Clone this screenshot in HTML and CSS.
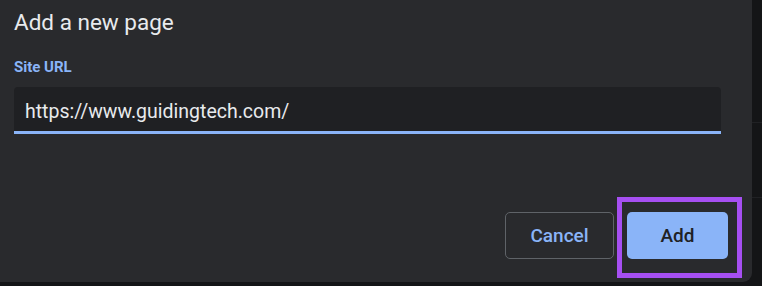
FILE: index.html
```html
<!DOCTYPE html>
<html>
<head>
<meta charset="utf-8">
<link rel="stylesheet" href="styles.css">
</head>
<body>
<div class="screen">
  <div class="dialog">
    <h1 class="title">Add a new page</h1>
    <label class="label">Site URL</label>
    <div class="field"><span class="value">https://www.guidingtech.com/</span></div>
    <div class="actions">
      <button class="btn cancel">Cancel</button>
      <div class="highlight"><button class="btn add">Add</button></div>
    </div>
  </div>
  <div class="side">
    <div class="side-line l1"></div>
    <div class="side-line l2"></div>
  </div>
</div>
</body>
</html>
```
FILE: styles.css
```css
html, body {
  margin: 0;
  padding: 0;
  background: #141517;
  font-family: Roboto, "Liberation Sans", sans-serif;
}
.screen {
  display: flex;
  width: 762px;
  height: 286px;
  overflow: hidden;
}
.dialog {
  width: 752px;
  height: 282px;
  background: #292a2d;
  border-bottom-right-radius: 9px;
  box-sizing: border-box;
  padding: 0 0 0 14px;
  display: flex;
  flex-direction: column;
  flex-shrink: 0;
}
.title {
  margin: 8px 0 0 0;
  font-size: 22.5px;
  font-weight: 400;
  line-height: 28px;
  color: #e8eaed;
}
.label {
  margin-top: 23px;
  font-size: 15px;
  font-weight: 700;
  line-height: 16px;
  color: #8ab4f8;
}
.field {
  margin-top: 12px;
  width: 707px;
  height: 47px;
  box-sizing: border-box;
  background: #1f2023;
  border-radius: 4px 4px 0 0;
  border-bottom: 3px solid #8ab4f8;
  padding: 13px 11px 0;
}
.value {
  font-size: 19.5px;
  color: #e8eaed;
}
.actions {
  margin-top: 63px;
  display: flex;
  align-items: flex-start;
  padding-left: 491px;
}
.btn {
  font-family: Roboto, "Liberation Sans", sans-serif;
  font-size: 19px;
  font-weight: 500;
  height: 47px;
  border-radius: 5px;
  cursor: pointer;
  padding: 0;
}
.cancel {
  margin-top: 15px;
  width: 109px;
  background: transparent;
  border: 1px solid #5f6368;
  color: #8ab4f8;
}
.highlight {
  margin-left: 3px;
  width: 125px;
  height: 81px;
  box-sizing: border-box;
  border: 5px solid #a64ff2;
  padding: 10px 0 0 5px;
}
.add {
  width: 101px;
  background: #8ab4f8;
  border: none;
  color: #202124;
}
.side {
  flex: 1;
  position: relative;
}
.side-line {
  position: absolute;
  left: 0;
  right: 0;
  height: 1px;
  background: #202124;
}
.l1 { top: 122px; }
.l2 { top: 197px; }
```
